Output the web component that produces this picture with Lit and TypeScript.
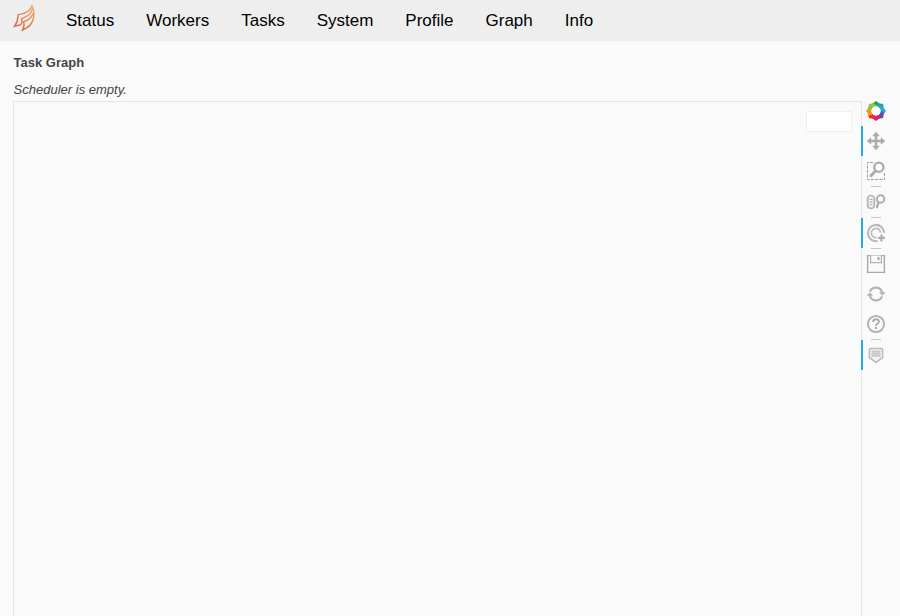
import { LitElement, html, css, svg } from "lit";
import { customElement, property } from "lit/decorators.js";

const petalColors = ["#12a04b", "#16aaa5", "#25aae1", "#6b4ba3", "#e0187c", "#ee2b24", "#f9921b", "#8cc63f"];

const icons: Record<string, unknown> = {
  logo: svg`${petalColors.map(
    (c, i) => svg`<path transform=${`rotate(${i * 45} 10 10)`} fill=${c} d="M10 0 L14 2.9 L14.4 7.4 Q11.6 4.6 6 6.2 L5.6 3.2z"/>`
  )}<circle cx="10" cy="10" r="4.7" fill="#fff"/>`,
  pan: svg`<path fill="#a9adb0" d="M10 .8l3.8 4.4h-2.5v3.5h3.5V6.2L19.2 10l-4.4 3.8v-2.5h-3.5v3.5h2.5L10 19.2l-3.8-4.4h2.5v-3.5H5.2v2.5L.8 10l4.4-3.8v2.5h3.5V5.2H6.2z"/>`,
  zoom: svg`<path fill="none" stroke="#9a9ea1" stroke-dasharray="3 1.3" d="M7 1.5H1.5v17h17V12"/>
    <circle cx="12.9" cy="6.3" r="4.6" fill="#fff" stroke="#a9adb0" stroke-width="2.3"/>
    <path stroke="#a9adb0" stroke-width="2.8" stroke-linecap="round" d="M9.2 10.3L5 14.8"/>`,
  wheel: svg`<rect x="1.6" y="3.5" width="6.8" height="12.8" rx="3.4" fill="#f4f5f5" stroke="#b0b4b6" stroke-width="1.7"/>
    <path stroke="#b5b9bb" stroke-width="1.3" d="M3.5 7.4h3M3.5 10h3M3.5 12.6h3"/>
    <circle cx="14.6" cy="7" r="3.7" fill="#fff" stroke="#a9adb0" stroke-width="2"/>
    <path stroke="#a9adb0" stroke-width="2.2" stroke-linecap="round" d="M12.4 10.8L11 15.2"/>`,
  tap: svg`<path fill="none" stroke="#b5b9bb" stroke-width="2.1" d="M18.1 9.8A8.1 8.1 0 1 0 11.4 18"/>
    <path fill="none" stroke="#bdc0c2" stroke-width="1.8" d="M14.5 9.8A4.6 4.6 0 1 0 10.8 14.5"/>
    <path stroke="#a9adb0" stroke-width="2.2" d="M15.5 11.4v7M12 14.9h7"/>`,
  save: svg`<path fill="#fafafa" stroke="#a6aaad" stroke-width="1.4" d="M1.6 1.6h16.8v16.8H1.6z"/>
    <path fill="#fafafa" stroke="#b0b4b6" stroke-width="1.2" d="M4.6 1.6v7h10.8v-7"/>
    <path fill="#a1a6a9" d="M11.5 3h2v3.2h-2z"/>`,
  reset: svg`<path fill="none" stroke="#b0b4b6" stroke-width="2.1" d="M3.9 7.6A6.5 6.5 0 0 1 16.2 8.5M16.1 12.4A6.5 6.5 0 0 1 3.8 11.5"/>
    <path fill="#a9adb0" d="M13.2 8.2h6.2l-3 3.4zM.8 11.8H7L3.8 8.4z"/>`,
  help: svg`<circle cx="10" cy="10" r="8.1" fill="none" stroke="#b0b4b6" stroke-width="2"/>
    <path fill="none" stroke="#a9adb0" stroke-width="2" d="M7.2 7.9C7.2 4.3 12.9 4.3 12.9 7.7C12.9 9.6 10 9.6 10 12"/>
    <path fill="#a9adb0" d="M8.9 13h2.2v2.1H8.9z"/>`,
  hover: svg`<path fill="#f1f2f2" stroke="#b6babc" stroke-width="1.5" stroke-linejoin="round" d="M5 3.4h10q1.6 0 1.6 1.4v7.8L10 17.4 3.4 12.6V4.8q0-1.4 1.6-1.4z"/>
    <path fill="#d2d4d5" d="M5.5 5.5h9v6.5h-9z"/>
    <path stroke="#c4c7c9" d="M5.5 6.5h9M5.5 8.5h9M5.5 10.5h9"/>`,
};

@customElement("tool-button")
export class ToolButton extends LitElement {
  @property() icon = "";
  @property({ type: Boolean, reflect: true }) active = false;

  static styles = css`
    :host { display: flex; box-sizing: border-box; width: 30px; height: 30px; border-left: 2px solid transparent; padding-left: 3px; align-items: center; }
    :host([active]) { border-left-color: #26aae1; }
    svg { width: 20px; height: 20px; display: block; }
  `;

  render() {
    return html`<svg viewBox="0 0 20 20">${icons[this.icon]}</svg>`;
  }
}

@customElement("app-root")
export class AppRoot extends LitElement {
  static styles = css`
    :host { display: flex; flex-direction: column; height: 616px; overflow: hidden; background: #fafafa; font-family: "Liberation Sans", Arial, sans-serif; }
    header { display: flex; flex: none; height: 41px; background: #eee; box-sizing: border-box; }
    .brand { width: 50px; flex: none; }
    .brand svg { display: block; width: 22px; height: 28px; margin: 4px 0 0 13px; }
    nav { display: flex; }
    nav a { padding: 0 16px; font-size: 17px; line-height: 41px; color: #000; }
    main { display: flex; flex-direction: column; flex: 1; min-height: 0; color: #444; font-size: 13px; }
    .titles { padding-left: 13.6px; height: 55px; flex: none; line-height: 15px; }
    .title { font-weight: bold; padding-top: 14px; }
    .note { font-style: italic; padding-top: 12px; }
    .figure { display: flex; flex: 1; min-height: 0; padding-left: 13px; }
    .plot { width: 849px; box-sizing: border-box; margin-top: 5px; border: 1px solid #e5e5e5; border-bottom: 0; display: flex; justify-content: flex-end; align-items: flex-start; padding: 9px 9px 0 0; }
    .legend { width: 46px; height: 21px; box-sizing: border-box; background: #fff; border: 1px solid #f0f0f0; }
    .tools { width: 30px; margin-left: -1px; }
    .divider { width: 10px; height: 1px; margin-left: 10px; background: #c8c8c8; }
  `;

  render() {
    const divider = html`<div class="divider"></div>`;
    return html`
      <header>
        <div class="brand">
          <svg viewBox="0 0 22 28" fill="none">
            <defs>
              <linearGradient id="flame" gradientUnits="userSpaceOnUse" x1="20" y1="2" x2="5" y2="25">
                <stop offset="0" stop-color="#f3b073"/><stop offset=".5" stop-color="#ea8756"/><stop offset="1" stop-color="#db6047"/>
              </linearGradient>
            </defs>
            <g stroke="url(#flame)" stroke-width="1.45" stroke-linejoin="miter">
              <path d="M19 1.2C18.2 6.8 14 9.4 5 10.9C5.2 15.5 3.8 19 1.6 22.1L7.8 20.8"/>
              <path d="M19.5 4.5C18 10 15.2 12.2 8.6 14.6C9.4 17 9 19 7.8 20.8"/>
              <path d="M19 1.2C22.6 9.5 21 19.6 14 23.6L9.6 26C11 23 11.2 19.5 10.4 17.8C15.6 16.4 19 13 20.6 8.6"/>
            </g>
          </svg>
        </div>
        <nav>${["Status", "Workers", "Tasks", "System", "Profile", "Graph", "Info"].map((t) => html`<a>${t}</a>`)}</nav>
      </header>
      <main>
        <div class="titles">
          <div class="title">Task Graph</div>
          <div class="note">Scheduler is empty.</div>
        </div>
        <div class="figure">
          <div class="plot"><div class="legend"></div></div>
          <div class="tools">
            <tool-button icon="logo"></tool-button>
            <tool-button icon="pan" active></tool-button>
            <tool-button icon="zoom"></tool-button>
            ${divider}
            <tool-button icon="wheel"></tool-button>
            ${divider}
            <tool-button icon="tap" active></tool-button>
            ${divider}
            <tool-button icon="save"></tool-button>
            <tool-button icon="reset"></tool-button>
            <tool-button icon="help"></tool-button>
            ${divider}
            <tool-button icon="hover" active></tool-button>
          </div>
        </div>
      </main>
    `;
  }
}
